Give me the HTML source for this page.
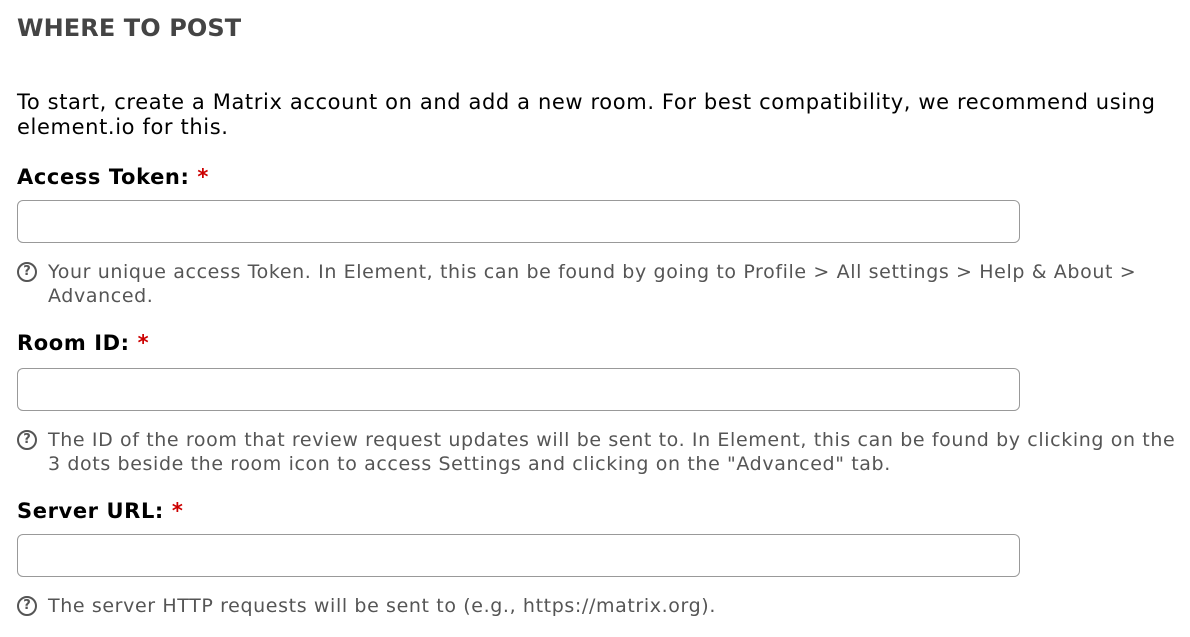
<!DOCTYPE html>
<html><head><meta charset="utf-8"><style>
body{margin:0;width:1190px;height:637px;background:#fff;font-family:Verdana,"DejaVu Sans",sans-serif;position:relative;overflow:hidden}
.a{position:absolute;white-space:nowrap}
h2{position:absolute;left:17px;top:14px;margin:0;font-size:24px;font-weight:bold;color:#444;letter-spacing:0.1px}
.p{font-size:21px;letter-spacing:0.62px;color:#000;left:17px}
.l{font-size:21px;letter-spacing:0.6px;font-weight:bold;color:#000;left:17px}
.l span{color:#c00}
.in{position:absolute;left:17px;border:1.5px solid #999;border-radius:6px;box-sizing:border-box;width:1003px;height:43px}
.h{font-size:19px;letter-spacing:0.62px;color:#555;left:48px}
.q{position:absolute;left:17px;width:16px;height:16px;border:2px solid #555;border-radius:50%;font:bold 13px "DejaVu Sans",sans-serif;color:#555;text-align:center;line-height:16px}
</style></head><body>
<h2>WHERE TO POST</h2>
<div class="a p" style="top:90px">To start, create a Matrix account on and add a new room. For best compatibility, we recommend using</div>
<div class="a p" style="top:115px">element.io for this.</div>
<div class="a l" style="top:165px">Access Token: <span>*</span></div>
<div class="in" style="top:200px"></div>
<div class="q" style="top:262px">?</div>
<div class="a h" style="top:261px">Your unique access Token. In Element, this can be found by going to Profile &gt; All settings &gt; Help &amp; About &gt;</div>
<div class="a h" style="top:285px">Advanced.</div>
<div class="a l" style="top:331px">Room ID: <span>*</span></div>
<div class="in" style="top:368px"></div>
<div class="q" style="top:430px">?</div>
<div class="a h" style="top:429px">The ID of the room that review request updates will be sent to. In Element, this can be found by clicking on the</div>
<div class="a h" style="top:453px">3 dots beside the room icon to access Settings and clicking on the "Advanced" tab.</div>
<div class="a l" style="top:499px">Server URL: <span>*</span></div>
<div class="in" style="top:534px"></div>
<div class="q" style="top:596px">?</div>
<div class="a h" style="top:595px">The server HTTP requests will be sent to (e.g., https://matrix.org).</div>
</body></html>
